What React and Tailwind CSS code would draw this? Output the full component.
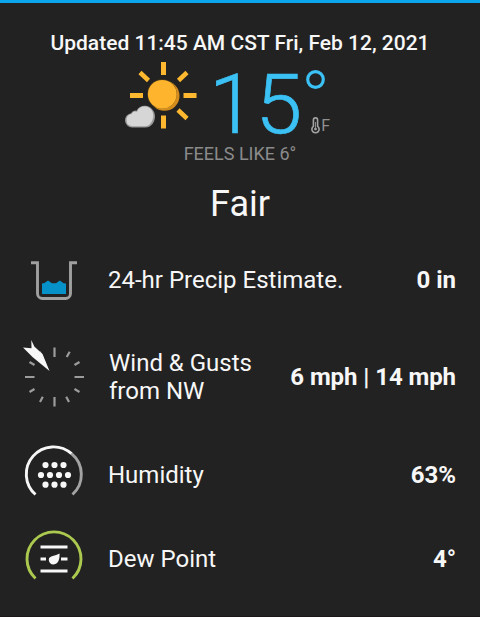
import React from 'react';

function SunIcon() {
  return (
    <svg width="76" height="76" viewBox="0 0 76 76" fill="none">
      <g fill="#feb830">
        <rect x="39" y="5" width="5" height="13" />
        <rect x="39" y="58.500" width="5" height="13" />
        <rect x="8" y="36" width="13" height="5" />
        <rect x="61.500" y="36" width="13" height="5" />
      </g>
      <g stroke="#feb830" strokeWidth="4.500">
        <path d="M18 15.500 26.500 23.500M65 15.500 56.500 23.500M56 53 65 61.500" />
      </g>
      <circle cx="42.500" cy="38.800" r="15" fill="#d48d1c" />
      <circle cx="40" cy="37" r="14.800" fill="#4b3a1c" />
      <circle cx="40.300" cy="37.300" r="14.400" fill="#feb42c" />
      <path d="M10 70.500a7.200 7.200 0 0 1-1-14.300 5 5 0 0 1 5.500-2.500c2-4 5.500-5.400 8.800-5 5.500.5 9.700 5 9.700 10.500 0 6-4 11.300-9.500 11.300z" fill="#989898" />
      <path d="M10 69.300a6.300 6.300 0 0 1-.6-12.400 5 5 0 0 1 5.600-2.200c1.500-4 5-5.500 8.500-5.200 4.500.4 8 4.500 7.800 9.300-.2 5.500-3.600 10.500-8.300 10.500z" fill="#d6d6d6" />
    </svg>
  );
}

function ThermometerIcon() {
  return (
    <svg width="9" height="17" viewBox="0 0 9 17" fill="none">
      <path d="M2.400 9.300V3a2.100 2.100 0 0 1 4.200 0v6.300a3.600 3.600 0 1 1-4.200 0z" stroke="#a3a3a3" strokeWidth="1.600" />
      <path d="M4.500 5v6" stroke="#8b8b8b" strokeWidth="1" />
      <circle cx="4.500" cy="12.100" r="1.400" fill="#a3a3a3" />
    </svg>
  );
}

function PrecipIcon() {
  return (
    <svg width="64" height="64" viewBox="0 0 64 64" fill="none">
      <path d="M9 14.700h6.500V45.500a5 5 0 0 0 5 5h23a5 5 0 0 0 5-5V14.700H55" stroke="#a0a0a0" strokeWidth="2.900" />
      <path d="M20 35.500 22.500 35 26 32.500 30 35.200 34 35.200 37.800 32.500 41.500 35.200 44 35.500V46H20z" fill="#0791c9" />
    </svg>
  );
}

function WindIcon() {
  return (
    <svg width="64" height="78" viewBox="0 0 64 78" fill="none">
      <g stroke="#9c9c9c" strokeWidth="2.200">
        <path d="M32.500 9.500v9.500M32.500 59v9.500M3 39h9.500M52.500 39H62" />
        <path d="M47.700 13.700 44.700 19M57.500 24 52.500 27M7.500 24 12.500 27M17.500 13.700 20.500 19M7.500 54 12.500 51M57.500 54 52.500 51M18 64 20.800 58.700M47 64 44.200 58.700" />
      </g>
      <path d="M1 9.500 9.500 10.300 9.300 2 12.300 8.500 20.500 16 27.500 33 10.500 19z" fill="#f7f7f7" />
    </svg>
  );
}

function HumidityIcon() {
  return (
    <svg width="64" height="64" viewBox="0 0 64 64" fill="none">
      <path d="M49.500 10.700A27 27 0 0 1 50.500 51.500" stroke="#a3a3a3" strokeWidth="2.900" />
      <path d="M13.500 51.500A27 27 0 0 1 49.500 10.700" stroke="#f7f7f7" strokeWidth="2.900" />
      <g fill="#f7f7f7">
        <circle cx="23.500" cy="22" r="3.100" />
        <circle cx="32.500" cy="22" r="3.100" />
        <circle cx="41.500" cy="22" r="3.100" />
        <circle cx="19" cy="32" r="3.100" />
        <circle cx="28" cy="32" r="3.100" />
        <circle cx="37" cy="32" r="3.100" />
        <circle cx="46" cy="32" r="3.100" />
        <circle cx="23.500" cy="41.700" r="3.100" />
        <circle cx="32.500" cy="41.700" r="3.100" />
        <circle cx="41.500" cy="41.700" r="3.100" />
      </g>
    </svg>
  );
}

function DewPointIcon() {
  return (
    <svg width="64" height="64" viewBox="0 0 64 64" fill="none">
      <path d="M13.500 51.500A27 27 0 1 1 50.500 51.500" stroke="#abc94f" strokeWidth="2.900" />
      <path d="M18.500 20h27M18.500 44h27M18.500 32H24M39 32h6.500" stroke="#f7f7f7" strokeWidth="3" />
      <path d="M37.500 26.500c.3 4.500-.5 10.500-6 11a4.700 4.700 0 0 1-4.700-5.200c.4-3.800 6.700-3.300 10.700-5.800z" fill="#f7f7f7" />
    </svg>
  );
}

const conditions = [
  { icon: PrecipIcon, label: '24-hr Precip Estimate.', value: '0 in', row: 'h-[84px]' },
  { icon: WindIcon, label: 'Wind & Gusts\nfrom NW', value: '6 mph | 14 mph', row: 'h-[111px] pb-[2px]', labelClass: 'pl-px', valueClass: 'tracking-[-0.07px]' },
  { icon: HumidityIcon, label: 'Humidity', value: '63%', row: 'h-[84px]' },
  { icon: DewPointIcon, label: 'Dew Point', value: '4°', row: 'h-[84px]' },
];

export default function App() {
  return (
    <div className="h-[617px] w-[480px] overflow-hidden border-t-[3px] border-b border-t-[#0ba5ee] border-b-[#1b1719] bg-[#222222] font-['Roboto',sans-serif] text-[#f7f7f7]">
      <p className="mt-7 text-center text-[21px] leading-6 font-medium">Updated 11:45 AM CST Fri, Feb 12, 2021</p>

      {/* Current temperature */}
      <div className="flex h-[85px] pt-[2px] pl-[122px]">
        <SunIcon />
        <div className="ml-[11px] flex text-[#3bc1f4]">
          <span className="mt-[13px] text-[84px] leading-[70px] font-light [-webkit-text-stroke:0.7px_#3bc1f4]">15</span>
          <div className="flex flex-col">
            <svg className="mt-[12px] ml-[3px]" width="21" height="21" viewBox="0 0 21 21" fill="none">
              <circle cx="10.500" cy="10.500" r="7.800" stroke="#3bc1f4" strokeWidth="3.200" />
            </svg>
            <div className="mt-[27px] ml-[9px] flex items-center text-[#8f8f8f]">
              <ThermometerIcon />
              <span className="ml-px text-[16px] leading-4">F</span>
            </div>
          </div>
        </div>
      </div>
      <p className="mt-1 text-center text-[18px] leading-5 text-[#8b8b8b]">FEELS LIKE 6°</p>
      <h1 className="mt-[18px] text-center text-[36px] leading-[44px]">Fair</h1>

      <div className="mt-3">
        {conditions.map(({ icon: Icon, label, value, row, labelClass = '', valueClass = '' }) => (
          <div key={label} className={`flex items-center pr-6 pl-[22px] ${row}`}>
            <Icon />
            <span className={`ml-[22px] text-[24px] leading-7 whitespace-pre ${labelClass}`}>{label}</span>
            <span className={`ml-auto text-[24px] leading-7 font-bold whitespace-nowrap ${valueClass}`}>{value}</span>
          </div>
        ))}
      </div>
    </div>
  );
}
